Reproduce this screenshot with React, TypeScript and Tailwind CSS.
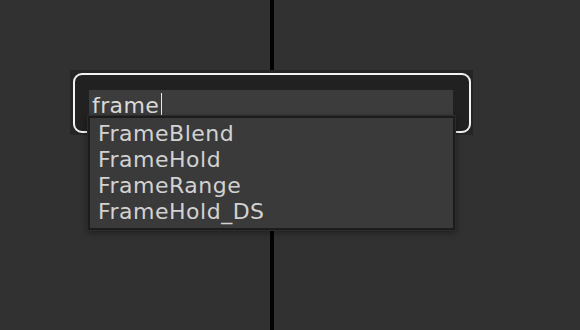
import { useState } from "react";

const matches = ["FrameBlend", "FrameHold", "FrameRange", "FrameHold_DS"];

export default function App() {
  const [query] = useState("frame");

  return (
    <div className="relative flex h-[330px] w-[580px] overflow-hidden bg-[#313131] font-['DejaVu_Sans',sans-serif]">
      {/* panes */}
      <div className="w-[270px] shrink-0" />
      <div className="w-[4px] shrink-0 bg-black" />
      <div className="flex-1" />

      {/* tab search popup */}
      <div className="absolute left-[70px] top-[70px] h-[65px] w-[403px] bg-[#252525] p-[3px]">
        <div className="h-[60px] w-[398px] rounded-[9px] border-2 border-[#f2f2f2] bg-[#212121]" />
      </div>

      <div className="absolute left-[89px] top-[90px] flex h-[26px] w-[364px] bg-[#3c3c3c] pl-[3px] pt-[4px] text-[22px] leading-[24px] tracking-[0.4px] text-[#dadada]">
        <span>{query}</span>
        <span className="ml-[2px] -mt-[1px] h-[22px] w-[1px] bg-[#e8e8e8]" />
      </div>

      <div className="absolute left-[87px] top-[115px] h-[116px] w-[369px] border border-[#2b2b2b] shadow-[0_2px_6px_rgba(0,0,0,0.35)]">
        <div className="h-full w-full border-2 border-[#1c1c1c] bg-[#3a3a3a] pl-[8px] pt-[3px]">
          {matches.map((m) => (
            <div key={m} className="text-[22px] leading-[26px] tracking-[0.5px] text-[#d2d2d2]">
              {m}
            </div>
          ))}
        </div>
      </div>
    </div>
  );
}
